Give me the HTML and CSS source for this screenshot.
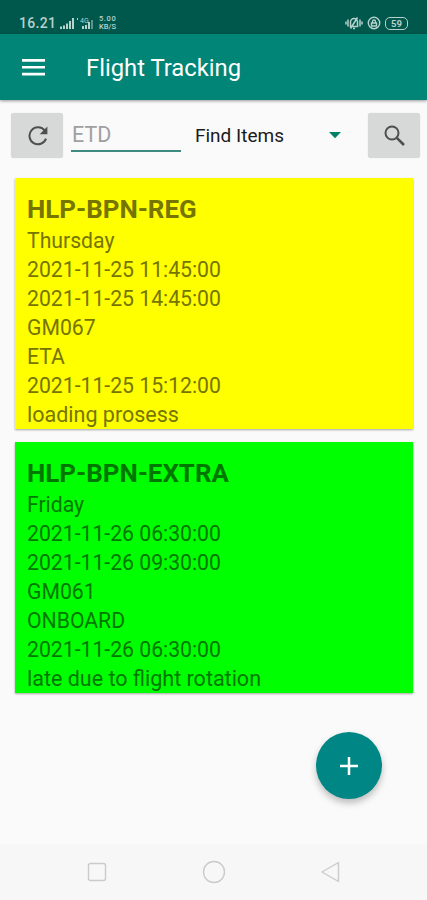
FILE: index.html
```
<!DOCTYPE html>
<html lang="en">

<head>
    <meta charset="UTF-8">
    <title>Flight Tracking</title>
    <meta name="viewport" content="width=device-width, initial-scale=1.0">
    <link rel="stylesheet" href="styles.css">
</head>

<body>
    <div class="status-bar">
        <div class="status-left">
            <span class="clock">16.21</span>
            <svg class="signal" width="14" height="11" viewBox="0 0 14 11" fill="currentColor">
                <path d="M0 8.500h2V11H0zM3 7.500h2V11H3zM6 5.500h2V11H6zM9 3h2v8H9zM12 0h2v11h-2z"/>
            </svg>
            <svg class="signal-data" width="16" height="12" viewBox="0 0 16 12" fill="currentColor">
                <path d="M0 1h1v2H0zM5 9h2v3H5zM8 8h2v4H8zM11 5h2v7h-2zM14.500 3h1v9h-1z"/>
                <text x="3" y="6" font-size="7">4G</text>
            </svg>
            <span class="speed"><span>5.00</span><span>KB/S</span></span>
        </div>
        <div class="status-right">
            <svg width="18" height="14" viewBox="0 0 18 14" fill="none" stroke="currentColor" stroke-width="1.5">
                <path d="M1 5.500v3M3 3.500v7M17 5.500v3M15 3.500v7M5.500 10.500V6a3.500 3.500 0 0 1 7 0v4.500zM8 12.500h2M12.500 1.500l-7 11"/>
            </svg>
            <svg width="14" height="14" viewBox="0 0 14 14" fill="none" stroke="currentColor" stroke-width="1.4">
                <circle cx="7" cy="7" r="5.700"/>
                <path d="M4.500 7h5v3h-5zM5.500 7V5.500a1.500 1.500 0 0 1 3 0V7"/>
            </svg>
            <div class="battery"><span>59</span></div>
        </div>
    </div>

    <header class="app-bar">
        <svg class="menu-icon" width="23" height="17" viewBox="0 0 23 17" fill="currentColor">
            <path d="M0 0h23v2.700H0zM0 6.900h23v2.700H0zM0 13.800h23v2.700H0z"/>
        </svg>
        <h1>Flight Tracking</h1>
    </header>

    <main>
        <form class="search-row">
            <button type="button" class="icon-btn" aria-label="Refresh">
                <svg width="20" height="20" viewBox="0 0 20 20" fill="none" stroke="currentColor" stroke-width="2">
                    <path d="M16.800 4.700A8.500 8.500 0 1 0 18 12.600"/>
                    <path d="M19.400.500v7.700h-7.700z" fill="currentColor" stroke="none"/>
                </svg>
            </button>
            <input type="text" class="etd-input" placeholder="ETD">
            <div class="spinner">
                <span>Find Items</span>
                <svg width="12" height="7" viewBox="0 0 12 7" fill="currentColor"><path d="M0 0h12L6 6.300z"/></svg>
            </div>
            <button type="button" class="icon-btn search-btn" aria-label="Search">
                <svg width="22" height="22" viewBox="0 0 22 22" fill="none" stroke="currentColor">
                    <circle cx="8" cy="8" r="6.500" stroke-width="2"/>
                    <path d="M12.800 12.800l7.200 7.200" stroke-width="2.600"/>
                </svg>
            </button>
        </form>

        <div class="card card-yellow">
            <h2>HLP-BPN-REG</h2>
            <p>Thursday</p>
            <p>2021-11-25 11:45:00</p>
            <p>2021-11-25 14:45:00</p>
            <p>GM067</p>
            <p>ETA</p>
            <p>2021-11-25 15:12:00</p>
            <p class="remark">loading prosess</p>
        </div>

        <div class="card card-green">
            <h2>HLP-BPN-EXTRA</h2>
            <p>Friday</p>
            <p>2021-11-26 06:30:00</p>
            <p>2021-11-26 09:30:00</p>
            <p>GM061</p>
            <p>ONBOARD</p>
            <p>2021-11-26 06:30:00</p>
            <p class="remark">late due to flight rotation</p>
        </div>
    </main>

    <button type="button" class="fab" aria-label="Add">
        <svg width="18" height="18" viewBox="0 0 18 18" stroke="currentColor" stroke-width="2.500">
            <path d="M9 0v18M0 9h18"/>
        </svg>
    </button>

    <nav class="nav-bar">
        <svg width="24" height="24" viewBox="0 0 24 24"><rect x="3.500" y="3.500" width="17" height="17" rx="2"/></svg>
        <svg width="24" height="24" viewBox="0 0 24 24"><circle cx="12" cy="12" r="10.500"/></svg>
        <svg width="24" height="24" viewBox="0 0 24 24"><path d="M19.500 2.500v19L3 12z" stroke-linejoin="round"/></svg>
    </nav>
</body>

</html>
```

FILE: styles.css
```
* {
    box-sizing: border-box;
}

body {
    margin: 0;
    height: 900px;
    display: flex;
    flex-direction: column;
    position: relative;
    overflow: hidden;
    font-family: Roboto, sans-serif;
    background-color: #fafafa;
}

.status-bar {
    height: 34px;
    padding: 12px 19px 0 19px;
    display: flex;
    justify-content: space-between;
    background: #00574b;
    color: #b5d2cd;
}

.status-left,
.status-right {
    display: flex;
    align-items: center;
    height: 22px;
}

.clock {
    width: 41px;
    font-size: 14px;
    font-weight: 500;
    letter-spacing: 0.3px;
}

.signal-data {
    margin-left: 3px;
}

.speed {
    display: flex;
    flex-direction: column;
    margin-left: 6px;
    font-size: 7.5px;
    font-weight: 500;
    line-height: 8px;
}

.speed span:first-child {
    letter-spacing: 0.6px;
}

.status-right {
    gap: 4px;
}

.battery {
    width: 23px;
    height: 13px;
    border: 1.5px solid currentColor;
    border-radius: 5px;
    font-size: 9.5px;
    font-weight: 700;
    line-height: 11px;
    text-align: center;
}

.app-bar {
    height: 66px;
    padding-left: 22px;
    display: flex;
    align-items: center;
    background: #008577;
    color: #fff;
    box-shadow: 0 1px 3px rgba(0, 0, 0, 0.4);
}

.app-bar h1 {
    margin: 2px 0 0 41px;
    font-size: 23.8px;
    font-weight: 400;
}

main {
    flex: 1;
    padding: 13px 14px 0 15px;
}

.search-row {
    display: flex;
    align-items: flex-start;
    height: 65px;
    margin: 0 -7px 0 -4px;
}

.icon-btn {
    display: flex;
    align-items: center;
    justify-content: center;
    width: 52px;
    height: 45px;
    padding: 0 0 0 2px;
    border: none;
    border-radius: 3px;
    background: #d6d9d8;
    color: #4d4f4e;
    box-shadow: 0 0 1px rgba(0, 0, 0, 0.2);
}

.search-btn {
    padding-left: 1px;
}

.etd-input {
    width: 110px;
    height: 39px;
    margin-left: 8px;
    padding: 6px 0 0 1px;
    border: none;
    border-bottom: 2px solid #3e8a80;
    background: none;
    font-family: inherit;
    font-size: 21.5px;
    outline: none;
}

.etd-input::placeholder {
    color: #a0a0a0;
}

.spinner {
    flex: 1;
    height: 45px;
    padding: 0 27px 0 14px;
    display: flex;
    align-items: center;
    justify-content: space-between;
    font-size: 19px;
    color: #1b1b1b;
}

.spinner svg {
    color: #008066;
}

.card {
    height: 251px;
    margin-bottom: 13px;
    padding: 16px 12px 0;
    box-shadow: 0 1px 2px rgba(0, 0, 0, 0.35);
}

.card-yellow {
    background: #ffff00;
    color: #757500;
}

.card-green {
    background: #00ff00;
    color: #007800;
}

.card h2 {
    margin: 0 0 2px;
    font-size: 25.9px;
    line-height: 30px;
    font-weight: 700;
}

.card p {
    margin: 0;
    font-size: 21.2px;
    line-height: 29px;
}

.card .remark {
    font-size: 21.5px;
}

.fab {
    position: absolute;
    left: 316px;
    top: 732px;
    width: 66px;
    height: 67px;
    padding: 0;
    display: flex;
    align-items: center;
    justify-content: center;
    border: none;
    border-radius: 50%;
    background: #008684;
    color: #fff;
    box-shadow: 0 4px 7px rgba(0, 0, 0, 0.25);
}

.nav-bar {
    height: 56px;
    padding: 0 84px 0 85px;
    display: flex;
    align-items: center;
    justify-content: space-between;
    background: #f7f7f7;
}

.nav-bar svg {
    fill: none;
    stroke: #cbcbcb;
    stroke-width: 1.4;
}
```
